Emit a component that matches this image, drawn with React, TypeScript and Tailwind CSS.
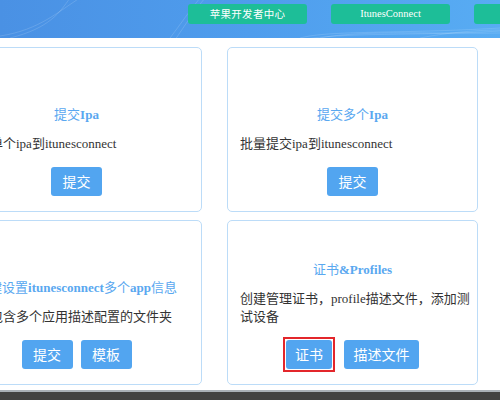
import React from "react";

const font = { fontFamily: '"Liberation Serif", "Noto Sans CJK SC", sans-serif' };

function Btn({ children, w }: { children: React.ReactNode; w: string }) {
  return (
    <button
      className={
        "h-[29px] rounded-[3px] bg-[#52a5f0] text-white text-[14px] flex items-center justify-center " + w
      }
      style={{ fontFamily: '"Noto Sans CJK SC", sans-serif' }}
    >
      {children}
    </button>
  );
}

function Card({
  title,
  desc,
  buttons,
  gap,
}: {
  title: React.ReactNode;
  desc: React.ReactNode;
  buttons: React.ReactNode;
  gap: string;
}) {
  return (
    <div className="h-[165px] rounded-[5px] border border-[#bcdcf8] bg-white flex flex-col justify-end pb-[15px] pl-[12px] pr-[4px]">
      <div className="text-center text-[13px] leading-[20px] text-[#5aa8f0] whitespace-nowrap mb-[10px] pr-[8px]">{title}</div>
      <div className="text-[13px] leading-[18px] text-[#333] mb-[14px]">{desc}</div>
      <div className={"flex justify-center pr-[8px] " + gap}>{buttons}</div>
    </div>
  );
}

export default function App() {
  return (
    <div className="w-[500px] h-[400px] overflow-hidden bg-white flex flex-col" style={font}>
      <div className="relative h-[38px] shrink-0 bg-gradient-to-r from-[#4a91e4] via-[#4f9ded] to-[#58acf3] overflow-hidden">
        <svg className="absolute inset-0" width="500" height="38" viewBox="0 0 500 38">
          <g fill="none" stroke="white" strokeOpacity="0.18" strokeWidth="0.8">
            <path d="M0 36 C40 30 60 10 80 -2" />
            <path d="M10 38 C50 28 60 12 70 -2" />
            <path d="M170 38 C180 25 190 10 200 -2" />
            <path d="M175 40 C185 25 195 10 205 -2" />
            <path d="M300 38 C330 30 400 34 500 28" />
            <path d="M300 40 C340 32 420 36 500 31" />
            <path d="M320 38 C360 30 430 34 500 33" />
            <path d="M420 38 C450 32 480 30 500 30" />
          </g>
        </svg>
        <div className="relative flex gap-[24px] pl-[188px] pt-[4px]">
          <div
            className="w-[119px] h-[20px] shrink-0 rounded-[3px] bg-[#1dbe98] text-white text-[10.5px] tracking-[0.3px] flex items-center justify-center"
            style={{ fontFamily: '"Noto Sans CJK SC", sans-serif' }}
          >
            苹果开发者中心
          </div>
          <div className="w-[119px] h-[20px] shrink-0 rounded-[3px] bg-[#1dbe98] text-white text-[10.5px] flex items-center justify-center">
            ItunesConnect
          </div>
          <div className="w-[119px] h-[20px] shrink-0 rounded-[3px] bg-[#1dbe98] text-white text-[10.5px] flex items-center justify-center">
            AppStore
          </div>
        </div>
      </div>

      <div className="grid grid-cols-[251px_251px] gap-x-[25px] gap-y-[8px] ml-[-49px] mt-[9px]">
        <Card
          gap="gap-[8px]"
          title={
            <>
              提交<b>Ipa</b>
            </>
          }
          desc={<>提交单个ipa到itunesconnect</>}
          buttons={<Btn w="w-[51px]">提交</Btn>}
        />
        <Card
          gap="gap-[8px]"
          title={
            <>
              提交多个<b>Ipa</b>
            </>
          }
          desc={<>批量提交ipa到itunesconnect</>}
          buttons={<Btn w="w-[51px]">提交</Btn>}
        />
        <Card
          gap="gap-[8px]"
          title={
            <>
              一键设置<b>itunesconnect</b>多个<b>app</b>信息
            </>
          }
          desc={<>选择包含多个应用描述配置的文件夹</>}
          buttons={
            <>
              <Btn w="w-[51px]">提交</Btn>
              <Btn w="w-[51px]">模板</Btn>
            </>
          }
        />
        <Card
          gap="gap-[12px]"
          title={
            <>
              证书<b>&amp;Profiles</b>
            </>
          }
          desc={<>创建管理证书，profile描述文件，添加测试设备</>}
          buttons={
            <>
              <div className="-m-[3px] border-2 border-[#e3262b] p-px">
                <Btn w="w-[46px]">证书</Btn>
              </div>
              <Btn w="w-[75px]">描述文件</Btn>
            </>
          }
        />
      </div>

      <div className="mt-auto h-[10px] shrink-0 border-t-2 border-[#a9b0b7] bg-[#424242]" />
    </div>
  );
}
